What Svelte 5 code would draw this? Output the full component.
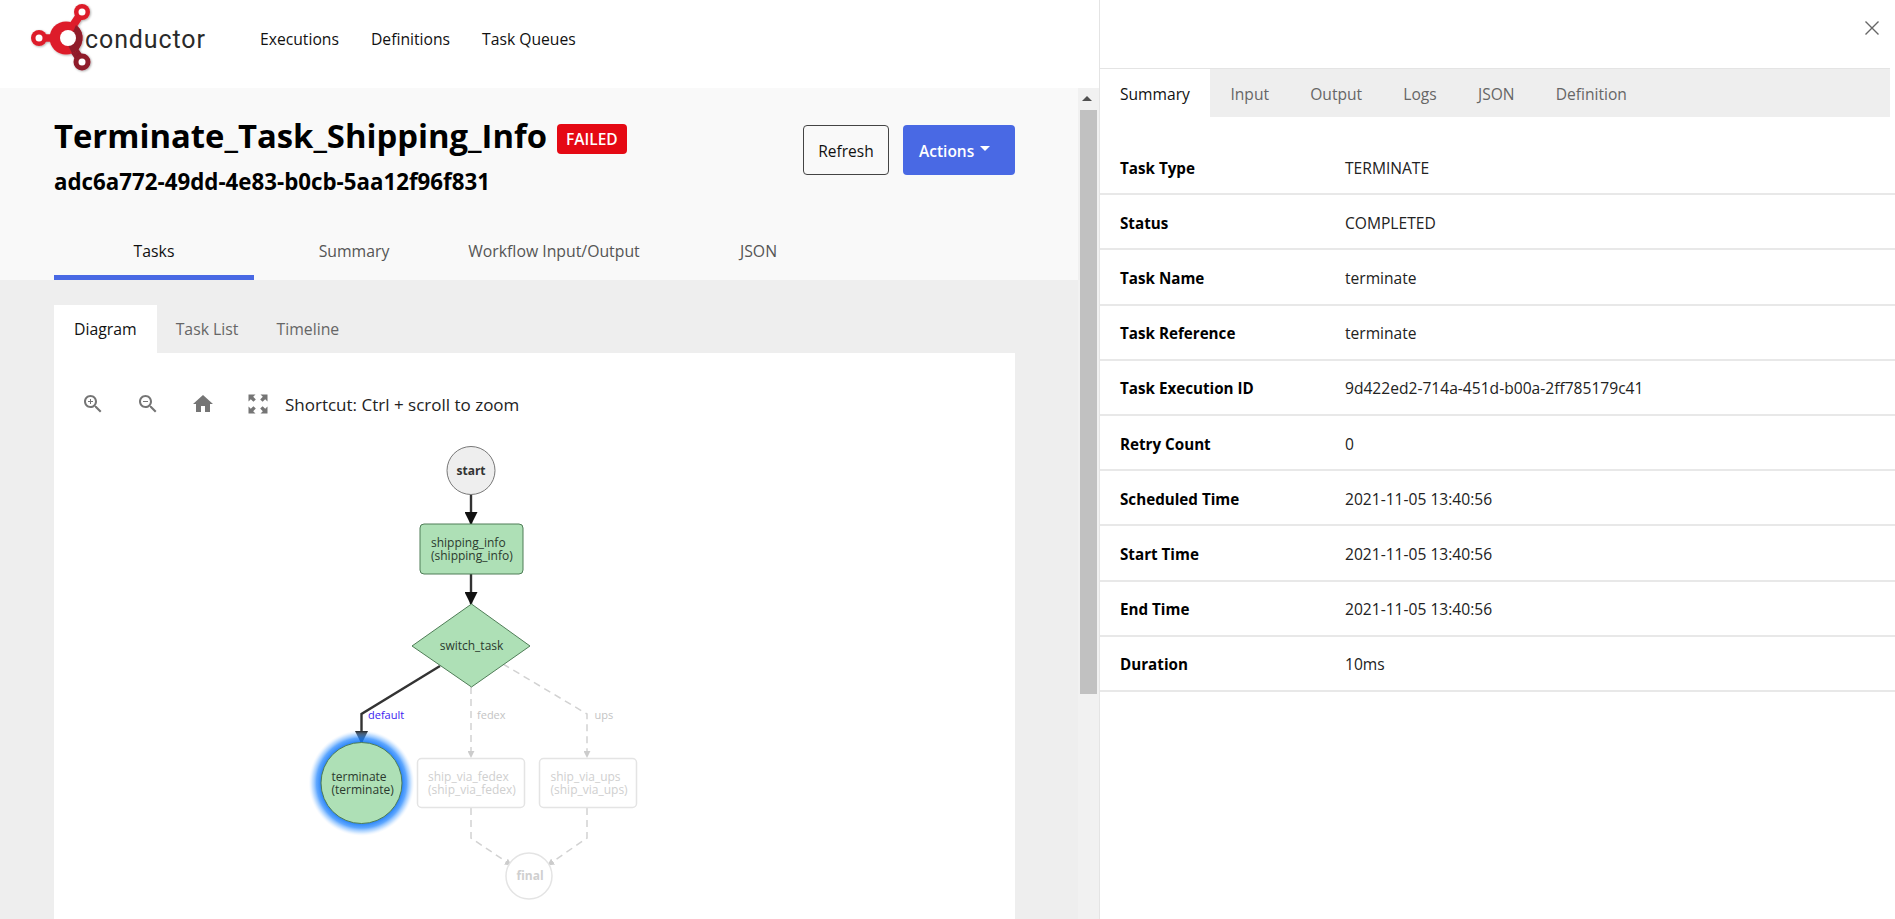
<script>
  const navItems = ['Executions', 'Definitions', 'Task Queues'];
  const mainTabs = ['Tasks', 'Summary', 'Workflow Input/Output', 'JSON'];
  const subTabs = ['Diagram', 'Task List', 'Timeline'];
  const drawerTabs = ['Summary', 'Input', 'Output', 'Logs', 'JSON', 'Definition'];
  const rows = [
    ['Task Type', 'TERMINATE'],
    ['Status', 'COMPLETED'],
    ['Task Name', 'terminate'],
    ['Task Reference', 'terminate'],
    ['Task Execution ID', '9d422ed2-714a-451d-b00a-2ff785179c41'],
    ['Retry Count', '0'],
    ['Scheduled Time', '2021-11-05 13:40:56'],
    ['Start Time', '2021-11-05 13:40:56'],
    ['End Time', '2021-11-05 13:40:56'],
    ['Duration', '10ms']
  ];
</script>

<div class="page">
  <div class="left">
    <header class="topbar">
      <div class="logo">
        <svg width="72" height="76" viewBox="26 0 72 76" aria-hidden="true">
          <defs>
            <filter id="lshadow" x="-20%" y="-20%" width="140%" height="140%">
              <feDropShadow dx="0.800" dy="0.800" stdDeviation="0.800" flood-color="#000" flood-opacity="0.35"/>
            </filter>
          </defs>
          <g filter="url(#lshadow)">
            <path d="M66 38 L39 38" stroke="#dd1f2b" stroke-width="7.500" fill="none"/>
            <path d="M70 30 L82 12" stroke="#dd1f2b" stroke-width="8" fill="none"/>
            <path d="M70 44 L82 62" stroke="#8f1a2a" stroke-width="8.500" fill="none"/>
            <circle cx="66" cy="38" r="16.500" fill="#dd1f2b"/>
            <path d="M76 25 A16.500 16.500 0 0 1 72 53.500 L68 45 L72 34 Z" fill="#8f1a2a"/>
            <circle cx="82" cy="12" r="8" fill="#dd1f2b"/>
            <circle cx="39" cy="38" r="8" fill="#dd1f2b"/>
            <circle cx="82" cy="62" r="8.500" fill="#8f1a2a"/>
          </g>
          <circle cx="82" cy="12" r="3.500" fill="#fff"/>
          <circle cx="39" cy="38" r="3.500" fill="#fff"/>
          <circle cx="82" cy="62" r="3.500" fill="#fff"/>
          <circle cx="68" cy="38" r="8" fill="#fff"/>
        </svg>
        <span class="logo-text">conductor</span>
      </div>
      <nav class="nav">
        {#each navItems as item}
          <span>{item}</span>
        {/each}
      </nav>
    </header>

    <div class="scrollarea">
      <main class="main">
        <section class="band">
          <div class="band-top">
            <div class="titles">
              <div class="title-row">
                <h1>Terminate_Task_Shipping_Info</h1>
                <span class="badge">FAILED</span>
              </div>
              <h2>adc6a772-49dd-4e83-b0cb-5aa12f96f831</h2>
            </div>
            <div class="actions">
              <button class="btn outline">Refresh</button>
              <button class="btn primary">Actions<span class="caret"></span></button>
            </div>
          </div>
          <div class="main-tabs">
            {#each mainTabs as t, i}
              <div class="main-tab" class:active={i === 0}>{t}</div>
            {/each}
          </div>
        </section>

        <section class="content">
          <div class="sub-tabs">
            {#each subTabs as t, i}
              <div class="sub-tab" class:active={i === 0}>{t}</div>
            {/each}
          </div>
          <div class="card">
            <div class="toolbar">
              <svg class="ticon" viewBox="0 0 24 24"><path d="M15.5 14h-.79l-.28-.27C15.41 12.59 16 11.11 16 9.5 16 5.91 13.09 3 9.5 3S3 5.91 3 9.5 5.91 16 9.5 16c1.61 0 3.09-.59 4.23-1.57l.27.28v.79l5 4.99L20.49 19l-4.99-5zm-6 0C7.01 14 5 11.99 5 9.5S7.01 5 9.5 5 14 7.01 14 9.5 11.99 14 9.5 14z"/><path d="M12 10h-2v2H9v-2H7V9h2V7h1v2h2v1z"/></svg>
              <svg class="ticon" viewBox="0 0 24 24"><path d="M15.5 14h-.79l-.28-.27C15.41 12.59 16 11.11 16 9.5 16 5.91 13.09 3 9.5 3S3 5.91 3 9.5 5.91 16 9.5 16c1.61 0 3.09-.59 4.23-1.57l.27.28v.79l5 4.99L20.49 19l-4.99-5zm-6 0C7.01 14 5 11.99 5 9.5S7.01 5 9.5 5 14 7.01 14 9.5 11.99 14 9.5 14zM7 9h5v1H7z"/></svg>
              <svg class="ticon" viewBox="0 0 24 24"><path d="M10 20v-6h4v6h5v-8h3L12 3 2 12h3v8z"/></svg>
              <svg class="ticon" viewBox="0 0 24 24"><path d="M2.5 2.5h7l-2.3 2.3 2.6 2.6-2.4 2.4-2.6-2.6-2.3 2.3zM21.500 2.500v7l-2.300-2.300-2.600 2.600-2.400-2.400 2.600-2.600-2.300-2.300zM2.500 21.500v-7l2.300 2.300 2.600-2.600 2.400 2.400-2.600 2.600 2.300 2.300zM21.500 21.500h-7l2.300-2.300-2.600-2.600 2.400-2.400 2.600 2.600 2.300-2.300z"/></svg>
              <span class="shortcut">Shortcut: Ctrl + scroll to zoom</span>
            </div>
            <svg class="graph" width="961" height="479" viewBox="54 440 961 479">
              <defs>
                <marker id="ah" viewBox="0 0 12 12" refX="11" refY="6" markerWidth="13" markerHeight="13" markerUnits="userSpaceOnUse" orient="auto"><path d="M0 0 L12 6 L0 12 Z" fill="#111"/></marker>
                <marker id="ahg" viewBox="0 0 8 8" refX="7" refY="4" markerWidth="7" markerHeight="7" markerUnits="userSpaceOnUse" orient="auto"><path d="M0 0 L8 4 L0 8 Z" fill="#ccc"/></marker>
                <radialGradient id="halo">
                  <stop offset="0.760" stop-color="#0f74f5" stop-opacity="0.900"/>
                  <stop offset="0.850" stop-color="#2b8bff" stop-opacity="0.750"/>
                  <stop offset="0.930" stop-color="#86bfff" stop-opacity="0.450"/>
                  <stop offset="1" stop-color="#d8e9ff" stop-opacity="0"/>
                </radialGradient>
              </defs>

              <path class="edge" d="M471 495 V524" marker-end="url(#ah)"/>
              <path class="edge" d="M471 574 V604" marker-end="url(#ah)"/>
              <path class="edge" d="M440 666 L361.500 714 V743" marker-end="url(#ah)"/>
              <path class="edge off" d="M471 687 V757" marker-end="url(#ahg)"/>
              <path class="edge off" d="M503 664 L587 714 V757" marker-end="url(#ahg)"/>
              <path class="edge off" d="M471 808 V838 L511 865" marker-end="url(#ahg)"/>
              <path class="edge off" d="M587 808 V838 L548 865" marker-end="url(#ahg)"/>

              <circle class="n-start" cx="471" cy="470.500" r="24"/>
              <text class="lbl bold" x="471" y="475" text-anchor="middle">start</text>

              <rect class="n-ok" x="420" y="524" width="103" height="50" rx="4"/>
              <text class="lbl" x="431" y="547">shipping_info</text>
              <text class="lbl" x="431" y="560">(shipping_info)</text>

              <polygon class="n-ok" points="471.500,604 530,646 471.500,687 412,646"/>
              <text class="lbl" x="471.500" y="650" text-anchor="middle">switch_task</text>

              <circle cx="361.500" cy="783" r="53" fill="url(#halo)"/>
              <circle class="n-ok" cx="361.500" cy="783" r="40.500"/>
              <text class="lbl" x="331.500" y="781">terminate</text>
              <text class="lbl" x="331.500" y="794">(terminate)</text>
              <text class="elbl on" x="368" y="719">default</text>

              <text class="elbl" x="477" y="719">fedex</text>
              <text class="elbl" x="594.500" y="719">ups</text>

              <rect class="n-off" x="417.500" y="758.500" width="107" height="49" rx="4"/>
              <text class="lbl off" x="428" y="781">ship_via_fedex</text>
              <text class="lbl off" x="428" y="794">(ship_via_fedex)</text>

              <rect class="n-off" x="539.500" y="758.500" width="97" height="49" rx="4"/>
              <text class="lbl off" x="550.500" y="781">ship_via_ups</text>
              <text class="lbl off" x="550.500" y="794">(ship_via_ups)</text>

              <circle class="n-off" cx="529" cy="876" r="23"/>
              <text class="lbl bold off" x="530" y="880" text-anchor="middle">final</text>
            </svg>
          </div>
        </section>
      </main>
      <div class="scrollbar">
        <div class="arrow"></div>
        <div class="thumb"></div>
      </div>
    </div>
  </div>

  <aside class="drawer">
    <div class="drawer-head">
      <svg class="close" width="16" height="16" viewBox="0 0 16 16"><path d="M1.500 1.500 L14.500 14.500 M14.500 1.500 L1.500 14.500" stroke="#666" stroke-width="1.400" fill="none"/></svg>
    </div>
    <div class="drawer-tabs">
      {#each drawerTabs as t, i}
        <div class="drawer-tab" class:active={i === 0}>{t}</div>
      {/each}
    </div>
    <div class="rows">
      {#each rows as [k, v]}
        <div class="row">
          <div class="k">{k}</div>
          <div class="v">{v}</div>
        </div>
      {/each}
    </div>
  </aside>
</div>

<style>
  :global(body) {
    margin: 0;
    background: #fff;
    overflow: hidden;
  }
  * { box-sizing: border-box; }
  .page {
    display: flex;
    width: 1895px;
    height: 919px;
    overflow: hidden;
    font-family: "Open Sans", "Noto Sans", sans-serif;
    color: #000;
    font-size: 14px;
  }
  .left {
    width: 1099px;
    display: flex;
    flex-direction: column;
    flex: none;
  }
  .topbar {
    height: 88px;
    display: flex;
    align-items: center;
    background: #fff;
    flex: none;
  }
  .logo {
    display: flex;
    align-items: center;
    width: 260px;
    padding-left: 26px;
    height: 88px;
  }
  .logo svg { margin-bottom: 12px; }
  .logo-text {
    font-family: "Roboto", sans-serif;
    font-weight: 400;
    font-size: 25px;
    letter-spacing: 0.900px;
    color: #2a2a2a;
    margin-left: -13px;
    margin-bottom: 9px;
  }
  .nav {
    display: flex;
    gap: 32px;
    font-size: 15.700px;
    font-weight: 500;
    color: #111;
    padding-bottom: 10px;
  }
  .scrollarea {
    flex: 1;
    display: flex;
    min-height: 0;
  }
  .main {
    width: 1078px;
    background: #eee;
    display: flex;
    flex-direction: column;
  }
  .band {
    height: 192px;
    background: #f9f9f9;
    padding: 0 0 0 54px;
    display: flex;
    flex-direction: column;
    flex: none;
  }
  .band-top {
    display: flex;
    justify-content: space-between;
    width: 961px;
    height: 187px;
  }
  .title-row {
    display: flex;
    align-items: center;
    gap: 10px;
    padding-top: 26px;
  }
  h1 {
    margin: 0;
    font-size: 32.800px;
    line-height: 44px;
    font-weight: 700;
    color: #000;
  }
  .badge {
    background: #e50914;
    color: #fff;
    font-size: 15.500px;
    font-weight: 600;
    line-height: 30px;
    height: 30px;
    padding: 0 9px;
    border-radius: 4px;
    margin-top: 6px;
  }
  h2 {
    margin: 9px 0 0;
    font-size: 22.300px;
    line-height: 30px;
    font-weight: 700;
    color: #000;
  }
  .actions {
    display: flex;
    gap: 14px;
    padding-top: 37px;
  }
  .btn {
    height: 50px;
    font-family: inherit;
    font-size: 15.500px;
    font-weight: 500;
    border-radius: 4px;
    padding: 2px 0 0;
  }
  .outline {
    width: 86px;
    background: transparent;
    border: 1px solid #444;
    color: #111;
  }
  .primary {
    width: 112px;
    background: #4969e4;
    border: none;
    color: #fff;
    font-weight: 600;
    display: flex;
    align-items: center;
    justify-content: flex-start;
    gap: 6px;
    padding-left: 16px;
  }
  .caret {
    width: 0;
    height: 0;
    border-left: 5.500px solid transparent;
    border-right: 5.500px solid transparent;
    border-top: 5.500px solid #fff;
    margin-bottom: 5px;
  }
  .main-tabs {
    display: flex;
    margin-top: -37px;
  }
  .main-tab {
    width: 200px;
    height: 42px;
    line-height: 27px;
    text-align: center;
    font-size: 15.800px;
    font-weight: 500;
    color: #555;
  }
  .main-tab:last-child { padding-left: 9px; }
  .main-tab.active {
    color: #111;
    border-bottom: 5px solid #4969e4;
  }
  .content {
    flex: 1;
    padding: 25px 63px 0 54px;
    min-height: 0;
    display: flex;
    flex-direction: column;
  }
  .sub-tabs {
    display: flex;
    height: 48px;
    flex: none;
  }
  .sub-tab {
    padding: 1px 19px 0;
    height: 48px;
    line-height: 47px;
    font-size: 15.800px;
    font-weight: 500;
    color: #666;
  }
  .sub-tab.active {
    padding: 1px 20px 0;
    background: #fff;
    color: #111;
  }
  .card {
    background: #fff;
    flex: 1;
    min-height: 0;
    overflow: hidden;
  }
  .toolbar {
    display: flex;
    align-items: center;
    height: 87px;
    padding: 15px 0 0 27px;
    gap: 31px;
  }
  .ticon {
    width: 24px;
    height: 24px;
    fill: #757575;
    flex: none;
  }
  .shortcut {
    font-size: 17px;
    color: #222;
    margin-left: -16px;
  }
  .graph { display: block; }
  .edge {
    fill: none;
    stroke: #333;
    stroke-width: 2.400;
  }
  .edge.off {
    stroke: #d2d2d2;
    stroke-width: 1.500;
    stroke-dasharray: 7 5;
  }
  .n-start {
    fill: #eee;
    stroke: #777;
    stroke-width: 1;
  }
  .n-ok {
    fill: #aee0b6;
    stroke: #4f7d57;
    stroke-width: 1;
  }
  .n-off {
    fill: #fff;
    stroke: #e4e4e4;
    stroke-width: 1.500;
  }
  .lbl {
    font-size: 12px;
    fill: #2b3a2e;
  }
  .lbl.bold {
    font-weight: 700;
    fill: #333;
  }
  .lbl.off { fill: #cfcfcf; }
  .elbl {
    font-size: 11px;
    fill: #c4c4c4;
  }
  .elbl.on { fill: #3a1cf0; }
  .scrollbar {
    width: 21px;
    background: #f1f1f1;
    padding: 0 2px;
    position: relative;
    flex: none;
  }
  .arrow {
    width: 0;
    height: 0;
    border-left: 5px solid transparent;
    border-right: 5px solid transparent;
    border-bottom: 5px solid #505050;
    position: absolute;
    top: 8px;
    left: 4px;
  }
  .thumb {
    height: 584px;
    width: 17px;
    margin-top: 22px;
    background: #c1c1c1;
  }
  .drawer {
    flex: 1;
    border-left: 1px solid #e4e4e4;
    display: flex;
    flex-direction: column;
    background: #fff;
  }
  .drawer-head {
    height: 68px;
    flex: none;
    position: relative;
  }
  .close {
    position: absolute;
    right: 15px;
    top: 20px;
  }
  .drawer-tabs {
    height: 49px;
    flex: none;
    display: flex;
    background: #eee;
    border-top: 1px solid #e4e4e4;
    margin-right: 5px;
    font-size: 15.600px;
    font-weight: 500;
    color: #666;
  }
  .drawer-tab {
    padding: 2px 20.600px 0;
    height: 48px;
    line-height: 46px;
  }
  .drawer-tab.active {
    padding: 2px 20px 0;
    background: #fff;
    color: #111;
  }
  .rows {
    padding-top: 23px;
  }
  .row {
    display: flex;
    align-items: center;
    height: 55.200px;
    border-bottom: 2px solid #e8e8e8;
    padding: 2px 0 0 20px;
  }
  .k {
    width: 225px;
    font-weight: 700;
    font-size: 15.200px;
    color: #000;
  }
  .v {
    font-size: 15.600px;
    color: #222;
  }
</style>
